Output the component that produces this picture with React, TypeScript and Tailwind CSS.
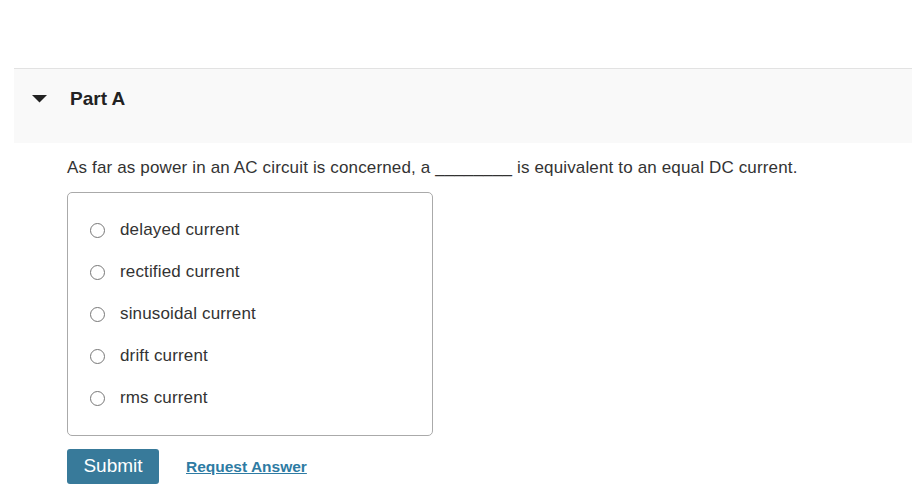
import React, { useState } from 'react';

const options = [
    'delayed current',
    'rectified current',
    'sinusoidal current',
    'drift current',
    'rms current',
];

export default function App() {
    const [selected, setSelected] = useState<number | null>(null);

    return (
        <div className="w-[912px] h-[496px] bg-white text-[#333333] font-['Liberation_Sans',Arial,sans-serif] pt-[68px] pl-[14px] overflow-hidden">
            {/* Part header */}
            <div className="h-[75px] bg-[#f9f9f9] border-t border-[#e2e2e2] flex items-start pt-[19px]">
                <div className="w-[56px] h-[22px] flex items-center pl-[18px]">
                    <svg width="15" height="8" viewBox="0 0 15 8">
                        <path d="M0 0 L15 0 L7.5 7.5 Z" fill="#222" />
                    </svg>
                </div>
                <span className="text-[19px] leading-[22px] font-bold text-[#222]">Part A</span>
            </div>

            <div className="pl-[53px] pt-[14px]">
                <p className="text-[17px] leading-[22px] tracking-[0.15px] text-[#333]">
                    As far as power in an AC circuit is concerned, a ________ is equivalent to an equal DC current.
                </p>

                {/* Choices */}
                <div className="mt-[13px] w-[366px] h-[244px] border border-[#aaaaaa] rounded-[5px] pt-[16px]">
                    {options.map((opt, i) => (
                        <label key={opt} className="flex items-center h-[42px] pl-[22px] cursor-pointer">
                            <span className="w-[15px] h-[15px] rounded-full border border-[#777] bg-white flex items-center justify-center">
                                {selected === i && <span className="w-[7px] h-[7px] rounded-full bg-[#333]" />}
                            </span>
                            <input
                                type="radio"
                                name="partA"
                                className="hidden"
                                checked={selected === i}
                                onChange={() => setSelected(i)}
                            />
                            <span className="ml-[15px] text-[17px] tracking-[0.15px] text-[#333]">{opt}</span>
                        </label>
                    ))}
                </div>

                {/* Actions */}
                <div className="mt-[13px] flex items-center">
                    <button className="w-[92px] h-[35px] bg-[#387a9a] text-white text-[19px] rounded-[3px]">
                        Submit
                    </button>
                    <a href="#" className="ml-[27px] text-[15.5px] font-bold text-[#2e7ba3] underline">
                        Request Answer
                    </a>
                </div>
            </div>
        </div>
    );
}
